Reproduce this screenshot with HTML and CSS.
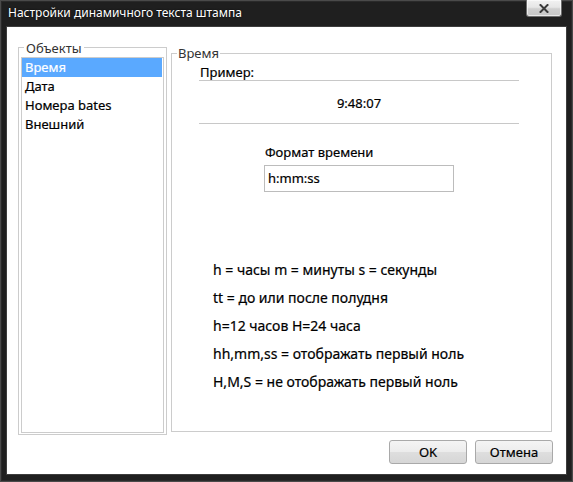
FILE: index.html
```html
<!DOCTYPE html>
<html lang="ru">
<head>
<meta charset="utf-8">
<title>Настройки динамичного текста штампа</title>
<link rel="stylesheet" href="styles.css">
</head>
<body>
<div class="window">
  <div class="titlebar">
    <span class="title">Настройки динамичного текста штампа</span>
    <div class="close-btn">
      <svg width="10" height="9" viewBox="0 0 10 9"><path d="M1.5 1 L8.5 8 M8.5 1 L1.5 8" stroke="#3a3a3a" stroke-width="2" stroke-linecap="square"/></svg>
    </div>
  </div>
  <div class="client">
    <div class="groups">
      <div class="group objects">
        <span class="legend">Объекты</span>
        <ul class="listbox">
          <li class="item selected">Время</li>
          <li class="item">Дата</li>
          <li class="item">Номера bates</li>
          <li class="item">Внешний</li>
        </ul>
      </div>
      <div class="group time">
        <span class="legend legend-time">Время</span>
        <div class="example">
          <div class="example-label">Пример:</div>
          <div class="example-value">9:48:07</div>
        </div>
        <div class="format">
          <div class="format-label">Формат времени</div>
          <div class="input">h:mm:ss</div>
        </div>
        <div class="help">
          <div>h = часы m = минуты s = секунды</div>
          <div>tt = до или после полудня</div>
          <div>h=12 часов H=24 часа</div>
          <div>hh,mm,ss = отображать первый ноль</div>
          <div>H,M,S = не отображать первый ноль</div>
        </div>
      </div>
    </div>
    <div class="buttons">
      <div class="btn">OK</div>
      <div class="btn">Отмена</div>
    </div>
  </div>
</div>
</body>
</html>
```
FILE: styles.css
```css
* { box-sizing: border-box; }
html, body { margin: 0; padding: 0; }
body {
  width: 573px;
  height: 482px;
  background: #1e1e1e;
  font-family: "Noto Sans", "Open Sans", sans-serif;
  font-size: 13px;
  color: #000;
  overflow: hidden;
}
.window {
  width: 573px;
  height: 482px;
  background: #1f1f1f;
  border: 1px solid #4a4a4a;
  box-shadow: inset 0 0 0 1px #2a2a2a;
  display: flex;
  flex-direction: column;
}
.titlebar {
  height: 26px;
  display: flex;
  align-items: flex-start;
  padding-left: 7px;
}
.title {
  color: #fff;
  font-size: 12px;
  line-height: 16px;
  margin-top: 4px;
  text-shadow: 0 0 2px rgba(0,0,0,0.8);
}
.close-btn {
  margin-left: auto;
  margin-right: 10px;
  margin-top: -1px;
  width: 36px;
  height: 17px;
  border: 1px solid #6e6e6e;
  border-top: none;
  border-radius: 0 0 3px 3px;
  background: linear-gradient(#f2f2f2 0%, #e6e6e6 45%, #cfcfcf 55%, #c6c6c6 100%);
  box-shadow: inset 0 0 0 1px rgba(255,255,255,0.6);
  display: flex;
  align-items: center;
  justify-content: center;
}
.close-btn svg { display: block; }
.client {
  margin-left: 6px;
  width: 559px;
  height: 447px;
  background: #fff;
  box-shadow: 0 0 0 1px #3d3d3d;
  display: flex;
  flex-direction: column;
  -webkit-text-stroke: 0.2px #000;
}
.groups {
  display: flex;
  align-items: flex-start;
  padding-left: 11px;
  height: 408px;
}
.group {
  position: relative;
  border: 1px solid #cccccc;
}
.objects {
  margin-top: 20px;
  width: 149px;
  height: 388px;
  padding: 9px 2px 1px 2px;
}
.time {
  margin-top: 26px;
  margin-left: 4px;
  width: 381px;
  height: 379px;
}
.legend {
  position: absolute;
  top: -8px;
  left: 5px;
  padding: 0 2px;
  background: #fff;
  color: #333;
  line-height: 16px;
  -webkit-text-stroke: 0;
}
.legend-time {
  top: -9px;
  padding: 0 1px;
}
.listbox {
  list-style: none;
  margin: 0;
  padding: 0;
  height: 376px;
  border: 1px solid #cccccc;
}
.item {
  height: 19px;
  line-height: 19px;
  padding-left: 3px;
  margin-right: 1px;
}
.item.selected {
  background: #5aa9ff;
  color: #fff;
  -webkit-text-stroke: 0.2px #fff;
}
.example {
  margin-left: 27px;
  width: 320px;
}
.example-label {
  margin-top: 10px;
  height: 17px;
  line-height: 16px;
  padding-left: 1px;
  border-bottom: 1px solid #c8c8c8;
}
.example-value {
  padding-top: 14px;
  padding-bottom: 12px;
  line-height: 16px;
  height: 43px;
  text-align: center;
  border-bottom: 1px solid #c8c8c8;
}
.format {
  margin-left: 92px;
  margin-top: 20px;
}
.format-label {
  line-height: 16px;
  padding-left: 1px;
}
.input {
  margin-top: 5px;
  width: 190px;
  height: 27px;
  border: 1px solid #bcbcbc;
  padding-left: 3px;
  line-height: 25px;
}
.help {
  margin-top: 64px;
  margin-left: 41px;
  line-height: 28px;
  font-size: 14px;
}
.buttons {
  display: flex;
  justify-content: flex-end;
  gap: 8px;
  padding-right: 13px;
  margin-top: 5px;
}
.btn {
  width: 78px;
  height: 24px;
  border: 1px solid #a9a9a9;
  border-radius: 3px;
  background: linear-gradient(#f4f4f4 0%, #ececec 48%, #dedede 52%, #d6d6d6 100%);
  text-align: center;
  line-height: 22px;
}
```
